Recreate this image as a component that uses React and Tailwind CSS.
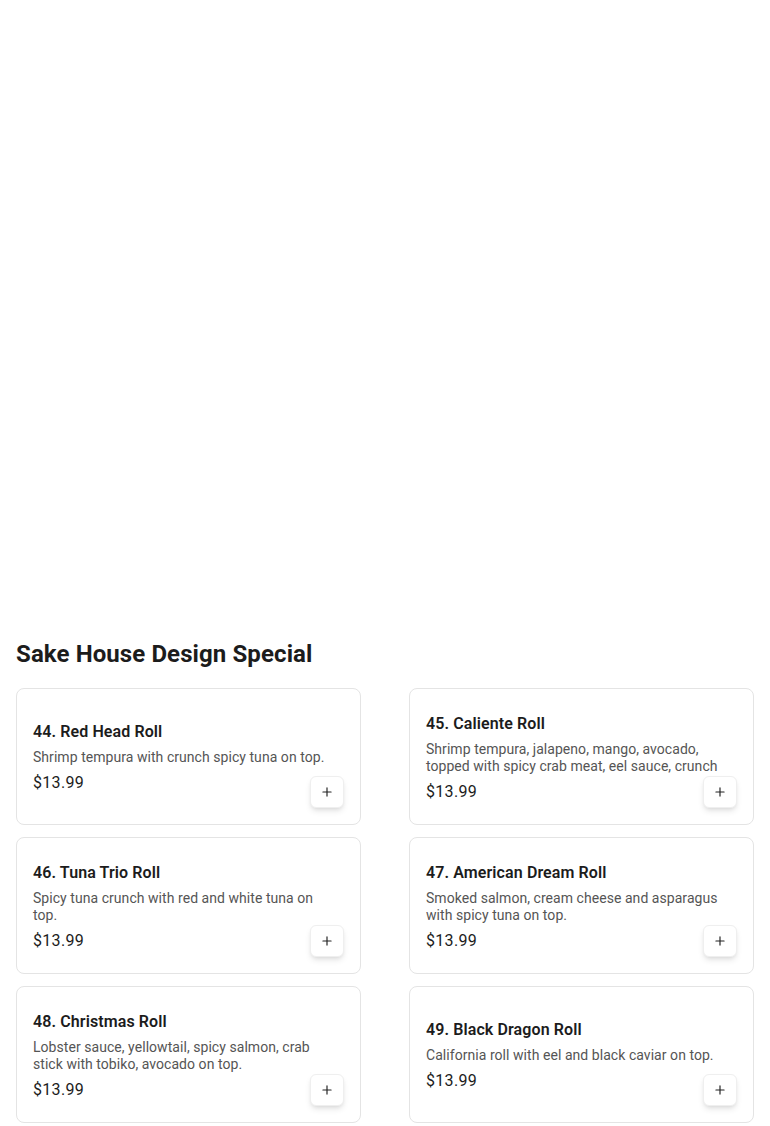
import React from "react";
import { Plus } from "lucide-react";

const items = [
  { no: 44, name: "Red Head Roll", desc: "Shrimp tempura with crunch spicy tuna on top.", price: "$13.99" },
  {
    no: 45,
    name: "Caliente Roll",
    desc: "Shrimp tempura, jalapeno, mango, avocado, topped with spicy crab meat, eel sauce, crunch",
    price: "$13.99",
  },
  { no: 46, name: "Tuna Trio Roll", desc: "Spicy tuna crunch with red and white tuna on top.", price: "$13.99" },
  {
    no: 47,
    name: "American Dream Roll",
    desc: "Smoked salmon, cream cheese and asparagus with spicy tuna on top.",
    price: "$13.99",
  },
  {
    no: 48,
    name: "Christmas Roll",
    desc: "Lobster sauce, yellowtail, spicy salmon, crab stick with tobiko, avocado on top.",
    price: "$13.99",
  },
  { no: 49, name: "Black Dragon Roll", desc: "California roll with eel and black caviar on top.", price: "$13.99" },
];

function MenuCard({ item }) {
  return (
    <div className="relative h-[137px] bg-white border border-[#e4e4e4] rounded-lg pl-4 pr-8 pt-[2px] flex flex-col justify-center">
      <h3 className="text-base leading-6 font-semibold text-[#1c1c1c] tracking-[0.1px]">
        {item.no}. {item.name}
      </h3>
      <p className="mt-[5px] text-sm leading-[17px] text-[#555555] tracking-[0.05px]">{item.desc}</p>
      <p className="mt-[5px] text-base leading-6 text-[#1c1c1c] tracking-[0.3px]">{item.price}</p>
      <button className="absolute right-4 bottom-4 w-[34px] h-8 flex items-center justify-center bg-white border border-[#efefef] rounded-md shadow-md">
        <Plus className="w-[14px] h-[14px] text-[#222]" strokeWidth={2} />
      </button>
    </div>
  );
}

export default function App() {
  return (
    <div className="min-h-screen bg-white font-['Roboto',sans-serif]">
      {/* Hero area (empty) */}
      <div className="h-[622px]" />

      <section className="px-4 pt-4 pb-8">
        <h2 className="text-2xl leading-8 font-bold text-[#1c1c1c] tracking-[0.1px] mb-[18px]">
          Sake House Design Special
        </h2>
        <div className="grid grid-cols-2 gap-x-12 gap-y-3">
          {items.map((item) => (
            <MenuCard key={item.no} item={item} />
          ))}
        </div>
      </section>
    </div>
  );
}
